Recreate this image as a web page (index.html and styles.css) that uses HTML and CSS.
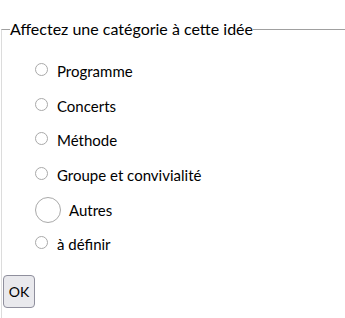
FILE: index.html
```html
<!DOCTYPE html>
<html lang="fr">
<head>
<meta charset="utf-8">
<title>Catégorie</title>
<link rel="stylesheet" href="styles.css">
</head>
<body>
<form class="form">
  <fieldset class="box">
    <legend class="title">Affectez une catégorie à cette idée</legend>
    <div class="options">
      <label class="option"><input class="radio" type="radio" name="cat"><span>Programme</span></label>
      <label class="option"><input class="radio" type="radio" name="cat"><span>Concerts</span></label>
      <label class="option"><input class="radio" type="radio" name="cat"><span>Méthode</span></label>
      <label class="option"><input class="radio" type="radio" name="cat"><span>Groupe et convivialité</span></label>
      <label class="option"><input class="radio radio-big" type="radio" name="cat"><span>Autres</span></label>
      <label class="option"><input class="radio" type="radio" name="cat"><span>à définir</span></label>
    </div>
    <button class="ok" type="button">OK</button>
  </fieldset>
</form>
</body>
</html>
```

FILE: styles.css
```css
html, body {
  margin: 0;
  padding: 0;
  background: #ffffff;
}

body {
  font-family: Lato, "Liberation Sans", sans-serif;
  color: #000000;
}

.form {
  margin: 0;
}

.box {
  margin: 19px 0 0 1px;
  padding: 0 0 20px 0;
  border: 1px solid #dcdcdc;
  border-top-color: #a0a0a0;
  border-right: none;
  min-width: 0;
}

.title {
  margin-left: 8px;
  padding: 0;
  font-size: 16px;
  line-height: 20px;
  color: #000000;
}

.options {
  display: grid;
  grid-auto-rows: 34.6px;
  margin-top: 15px;
  padding-left: 33px;
}

.option {
  display: flex;
  align-items: center;
  font-size: 15px;
  line-height: 20px;
}

.radio {
  appearance: none;
  -webkit-appearance: none;
  box-sizing: border-box;
  width: 13px;
  height: 13px;
  margin: -3px 9px 0 0;
  border: 1px solid #a9a9a9;
  border-radius: 50%;
  background: #ffffff;
  flex: none;
}

.radio-big {
  width: 26px;
  height: 26px;
  margin: 0 8px 0 0;
}

.ok {
  display: block;
  box-sizing: border-box;
  margin: 13px 0 0 1px;
  width: 32px;
  height: 33px;
  padding: 0;
  font-family: Lato, "Liberation Sans", sans-serif;
  font-size: 14px;
  color: #000000;
  background: #e9e9ed;
  border: 1px solid #8f8f9d;
  border-radius: 4px;
}
```
